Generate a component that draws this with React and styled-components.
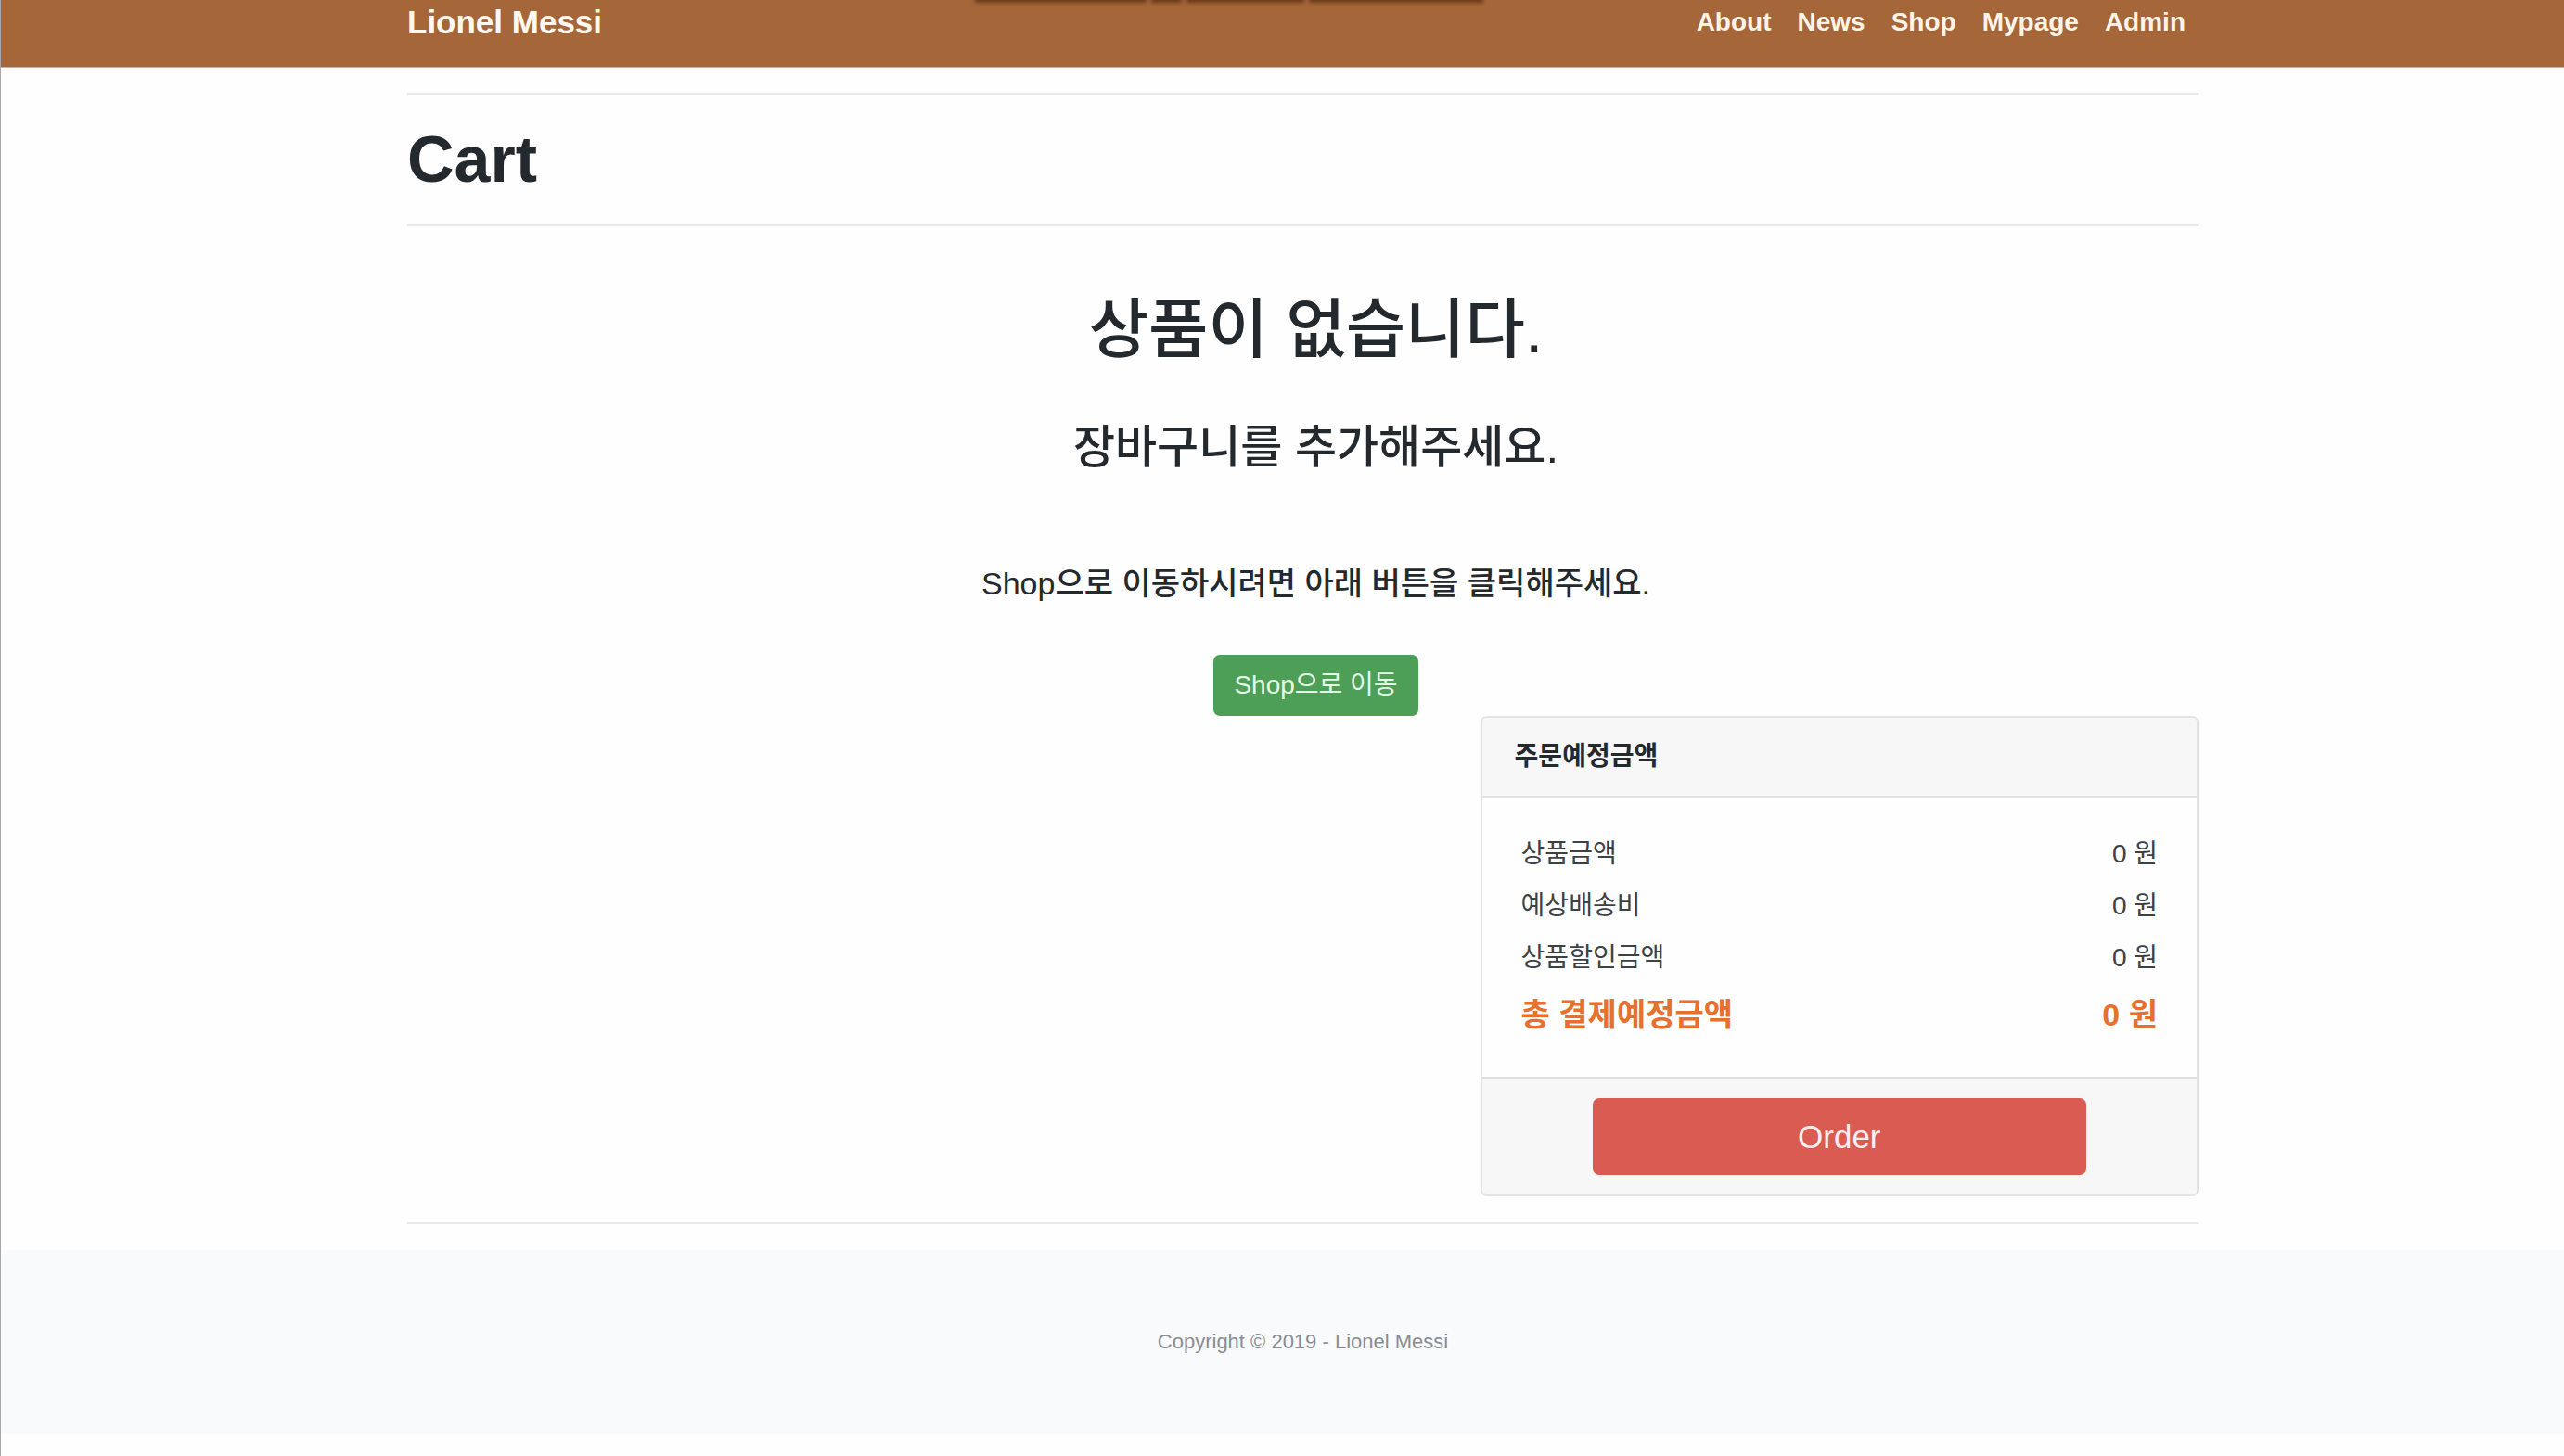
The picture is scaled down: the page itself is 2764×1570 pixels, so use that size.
import React from "react";
import styled, { createGlobalStyle, css } from "styled-components";

const GlobalStyle = createGlobalStyle`
  * { box-sizing: border-box; }
  body {
    margin: 0;
    background: #fefefe;
    color: #24292e;
    font-family: "Liberation Sans", "Noto Sans CJK KR", sans-serif;
    font-size: 28px;
    line-height: 42px;
  }
`;

const Page = styled.div`
  min-height: 100vh;
  border-left: 1px solid #a8a6a8;
`;

const Container = styled.div`
  width: 100%;
  max-width: 1975px;
  margin: 0 auto;
  padding-left: 44px;
`;

const Navbar = styled.header`
  position: relative;
  overflow: hidden;
  background: #a5663a;
  box-shadow: 0 1px 0 #cdb09c;
`;

const NavRow = styled(Container)`
  display: flex;
  align-items: center;
  justify-content: space-between;
  height: 72px;
  padding-bottom: 24px;
`;

const Brand = styled.a`
  color: #fff8ee;
  font-size: 35px;
  font-weight: 700;
  text-decoration: none;
`;

const NavLinks = styled.nav`
  display: flex;
`;

const NavLink = styled.a`
  padding: 0 14px;
  color: #fff4e6;
  font-weight: 700;
  text-decoration: none;
`;

const ShadowStrip = styled.div`
  position: absolute;
  top: -7px;
  left: 38%;
  width: 548px;
  display: flex;
  gap: 5px;
  filter: blur(2px);
`;

const ShadowWord = styled.span`
  flex: ${(p) => p.$size} 1 0;
  height: 10px;
  background: #693a18;
`;

const Rule = styled.hr`
  height: 2px;
  margin: 28px 0;
  border: 0;
  background: #e9e9e9;
`;

const Title = styled.h1`
  margin: 0;
  font-size: 70px;
  line-height: 84px;
  font-weight: 700;
`;

const EmptyCart = styled.section`
  display: flex;
  flex-direction: column;
  align-items: center;
  padding: 42px 0 0 28px;
  text-align: center;
`;

const messageSizes = {
  large: css`font-size: 70px; line-height: 84px; margin-bottom: 54px;`,
  medium: css`font-size: 49px; line-height: 60px; margin-bottom: 96px;`,
  small: css`font-size: 34px; line-height: 42px; margin-bottom: 56px;`,
};

const Message = styled.p`
  margin: 0;
  font-weight: 500;
  ${(p) => messageSizes[p.$size]}
`;

const Button = styled.button`
  border: 0;
  border-radius: 7px;
  font-family: inherit;
  cursor: pointer;
`;

const ShopButton = styled(Button)`
  height: 66px;
  padding: 0 22px;
  background: #4d9f57;
  color: #e6fbe6;
  font-size: 28px;
  line-height: 42px;
`;

const Card = styled.section`
  width: calc(40% + 2px);
  margin-left: auto;
  border: 2px solid #e4e4e4;
  border-radius: 7px;
  background: #fefefe;
  overflow: hidden;
`;

const CardHeader = styled.h2`
  margin: 0;
  padding: 21px 35px;
  border-bottom: 2px solid #e2e2e2;
  background: #f7f7f7;
  font-size: 28px;
  line-height: 42px;
  font-weight: 700;
`;

const Summary = styled.table`
  width: 100%;
  border-collapse: collapse;
`;

const CardBody = styled.div`
  padding: 33px 42px 35px;
`;

const Row = styled.tr`
  height: 56px;
  color: #3c4146;
  ${(p) => p.$total && css`
    height: 65px;
    color: #e8702f;
    font-size: 34px;
    font-weight: 700;
  `}
`;

const Label = styled.th`
  padding: 0;
  font-weight: inherit;
  text-align: left;
`;

const Amount = styled.td`
  padding: 0;
  text-align: right;
`;

const CardFooter = styled.div`
  display: flex;
  justify-content: center;
  padding: 21px 35px;
  border-top: 2px solid #dedede;
  background: #f7f7f7;
`;

const OrderButton = styled(Button)`
  width: 76%;
  height: 83px;
  background: #da5b52;
  color: #fdeeee;
  font-size: 35px;
`;

const Footer = styled.footer`
  padding: 78px 0;
  background: #f8fafc;
  color: #898d93;
  font-size: 22px;
  text-align: center;
`;

const links = ["About", "News", "Shop", "Mypage", "Admin"];
const rows = [
  { label: "상품금액", amount: "0 원" },
  { label: "예상배송비", amount: "0 원" },
  { label: "상품할인금액", amount: "0 원" },
  { label: "총 결제예정금액", amount: "0 원", total: true },
];

export default function App() {
  return (
    <>
      <GlobalStyle />
      <Page>
        <Navbar>
          <ShadowStrip aria-hidden="true">
            {[187, 34, 128, 190].map((size) => (
              <ShadowWord key={size} $size={size} />
            ))}
          </ShadowStrip>
          <NavRow>
            <Brand href="#home">Lionel Messi</Brand>
            <NavLinks>
              {links.map((name) => (
                <NavLink key={name} href={`#${name.toLowerCase()}`}>{name}</NavLink>
              ))}
            </NavLinks>
          </NavRow>
        </Navbar>
        <Container as="main">
          <Rule />
          <Title>Cart</Title>
          <Rule />
          <EmptyCart>
            <Message $size="large">상품이 없습니다.</Message>
            <Message $size="medium">장바구니를 추가해주세요.</Message>
            <Message $size="small">Shop으로 이동하시려면 아래 버튼을 클릭해주세요.</Message>
            <ShopButton type="button">Shop으로 이동</ShopButton>
          </EmptyCart>
          <Card>
            <CardHeader>주문예정금액</CardHeader>
            <CardBody>
              <Summary>
                <tbody>
                  {rows.map((row) => (
                    <Row key={row.label} $total={row.total}>
                      <Label scope="row">{row.label}</Label>
                      <Amount>{row.amount}</Amount>
                    </Row>
                  ))}
                </tbody>
              </Summary>
            </CardBody>
            <CardFooter>
              <OrderButton type="button">Order</OrderButton>
            </CardFooter>
          </Card>
          <Rule />
        </Container>
        <Footer>
          <Container>Copyright © 2019 - Lionel Messi</Container>
        </Footer>
      </Page>
    </>
  );
}
